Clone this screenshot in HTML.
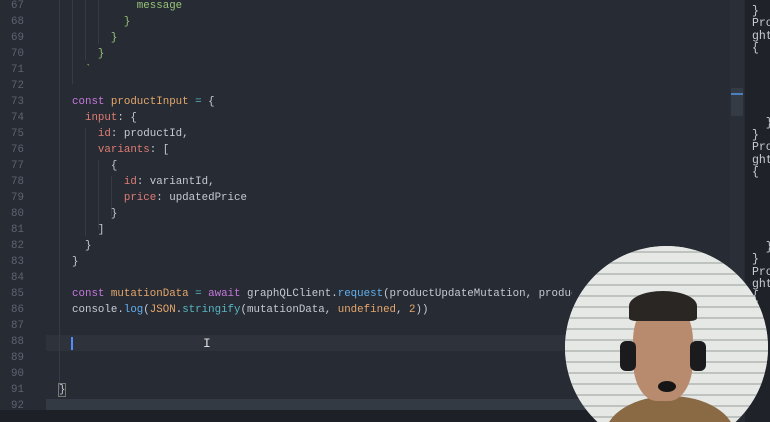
<!DOCTYPE html>
<html><head><style>
html,body{margin:0;width:770px;height:422px;overflow:hidden}
#w{position:relative;width:770px;height:422px;overflow:hidden;background:#272b33;font-family:"Liberation Mono",monospace;font-size:10.8px}
.ln{position:absolute;left:0;width:24px;text-align:right;color:#5d6370;}
.c{position:absolute;left:72px;white-space:pre;color:#c5cad3}
.k{color:#c678dd}.v{color:#e5a76b}.p{color:#e07c75}.f{color:#61afef}.g{color:#98c379}.t{color:#56b6c2}
.guide{position:absolute;width:1px;background:#363b44}
</style></head><body><div id="w">
<div style="position:absolute;left:46px;top:335px;width:684px;height:16px;background:#2d323b"></div>
<div style="position:absolute;left:46px;top:399px;width:684px;height:11px;background:#343a44"></div>
<div class="guide" style="left:59px;top:0;height:390px"></div>
<div class="guide" style="left:72px;top:0;height:84px"></div>
<div class="guide" style="left:85px;top:0;height:60px"></div>
<div class="guide" style="left:98px;top:0;height:44px"></div>
<div class="guide" style="left:85px;top:128px;height:108px"></div>
<div class="guide" style="left:98px;top:160px;height:70px"></div>
<div class="guide" style="left:111px;top:176px;height:40px"></div>
<div class="ln" style="top:0px">67</div><div class="c" style="top:0px">          <span class="g">message</span></div>
<div class="ln" style="top:16px">68</div><div class="c" style="top:16px"><span class="g">        }</span></div>
<div class="ln" style="top:32px">69</div><div class="c" style="top:32px"><span class="g">      }</span></div>
<div class="ln" style="top:48px">70</div><div class="c" style="top:48px"><span class="g">    }</span></div>
<div class="ln" style="top:64px">71</div><div class="c" style="top:64px"><span class="g">  `</span></div>
<div class="ln" style="top:80px">72</div>
<div class="ln" style="top:96px">73</div><div class="c" style="top:96px"><span class="k">const</span> <span class="v">productInput</span> <span class="t">=</span> {</div>
<div class="ln" style="top:112px">74</div><div class="c" style="top:112px">  <span class="p">input</span>: {</div>
<div class="ln" style="top:128px">75</div><div class="c" style="top:128px">    <span class="p">id</span>: productId,</div>
<div class="ln" style="top:144px">76</div><div class="c" style="top:144px">    <span class="p">variants</span>: [</div>
<div class="ln" style="top:160px">77</div><div class="c" style="top:160px">      {</div>
<div class="ln" style="top:176px">78</div><div class="c" style="top:176px">        <span class="p">id</span>: variantId,</div>
<div class="ln" style="top:192px">79</div><div class="c" style="top:192px">        <span class="p">price</span>: updatedPrice</div>
<div class="ln" style="top:208px">80</div><div class="c" style="top:208px">      }</div>
<div class="ln" style="top:224px">81</div><div class="c" style="top:224px">    ]</div>
<div class="ln" style="top:240px">82</div><div class="c" style="top:240px">  }</div>
<div class="ln" style="top:256px">83</div><div class="c" style="top:256px">}</div>
<div class="ln" style="top:272px">84</div>
<div class="ln" style="top:288px">85</div><div class="c" style="top:288px;width:500px;overflow:hidden"><span class="k">const</span> <span class="v">mutationData</span> <span class="t">=</span> <span class="k">await</span> graphQLClient.<span class="f">request</span>(productUpdateMutation, productInput)</div>
<div class="ln" style="top:304px">86</div><div class="c" style="top:304px">console.<span class="f">log</span>(<span class="v">JSON</span>.<span class="t">stringify</span>(mutationData, <span class="v">undefined</span>, <span class="v">2</span>))</div>
<div class="ln" style="top:320px">87</div>
<div class="ln" style="top:336px">88</div>
<div style="position:absolute;left:71px;top:337px;width:2px;height:13px;background:#528bff"></div>
<div class="c" style="left:203px;top:336px;color:#ddd;font-size:13px">I</div>
<div class="ln" style="top:352px">89</div>
<div class="ln" style="top:368px">90</div>
<div class="ln" style="top:384px">91</div><div class="c" style="left:59px;top:384px;outline:1px solid #777">}</div>
<div class="ln" style="top:400px">92</div>
<div style="position:absolute;left:730px;top:0;width:14px;height:410px;background:#2a2f37"></div>
<div style="position:absolute;left:731px;top:88px;width:12px;height:28px;background:#353b45"></div>
<div style="position:absolute;left:731px;top:93px;width:12px;height:2px;background:#4a7fc0"></div>
<div style="position:absolute;left:745px;top:0;width:25px;height:422px;background:#1f2329;color:#c8ccd2;font-size:11.5px;line-height:12.4px;white-space:pre;padding-left:7px;box-sizing:border-box;overflow:hidden;padding-top:6px">}
Pro
ght
{  "





  }
}
Pro
ght
{  "





  }
}
Pro
ght
{  "</div>
<div style="position:absolute;left:0;top:410px;width:730px;height:12px;background:#1d2026"></div>
<div style="position:absolute;left:565px;top:246px;width:205px;height:176px;overflow:hidden">
<div style="position:absolute;left:0;top:0;width:203px;height:203px;border-radius:50%;background:#d8dbd8;overflow:hidden">
 <div style="position:absolute;left:0;top:0;width:203px;height:203px;background:repeating-linear-gradient(0deg,#e6e8e6 0 9px,#bfc3c0 9px 11px)"></div>
 <div style="position:absolute;left:40px;top:150px;width:130px;height:80px;border-radius:50% 50% 0 0;background:#8a6a45"></div>
 <div style="position:absolute;left:68px;top:55px;width:60px;height:100px;border-radius:40%;background:#b88a6e"></div>
 <div style="position:absolute;left:64px;top:45px;width:68px;height:30px;border-radius:50% 50% 10% 10%;background:#2a2624"></div>
 <div style="position:absolute;left:55px;top:95px;width:16px;height:30px;border-radius:6px;background:#1b1b1d"></div>
 <div style="position:absolute;left:125px;top:95px;width:16px;height:30px;border-radius:6px;background:#1b1b1d"></div>
 <div style="position:absolute;left:93px;top:135px;width:18px;height:11px;border-radius:50%;background:#151515"></div>
</div>
</div>
</div></body></html>
